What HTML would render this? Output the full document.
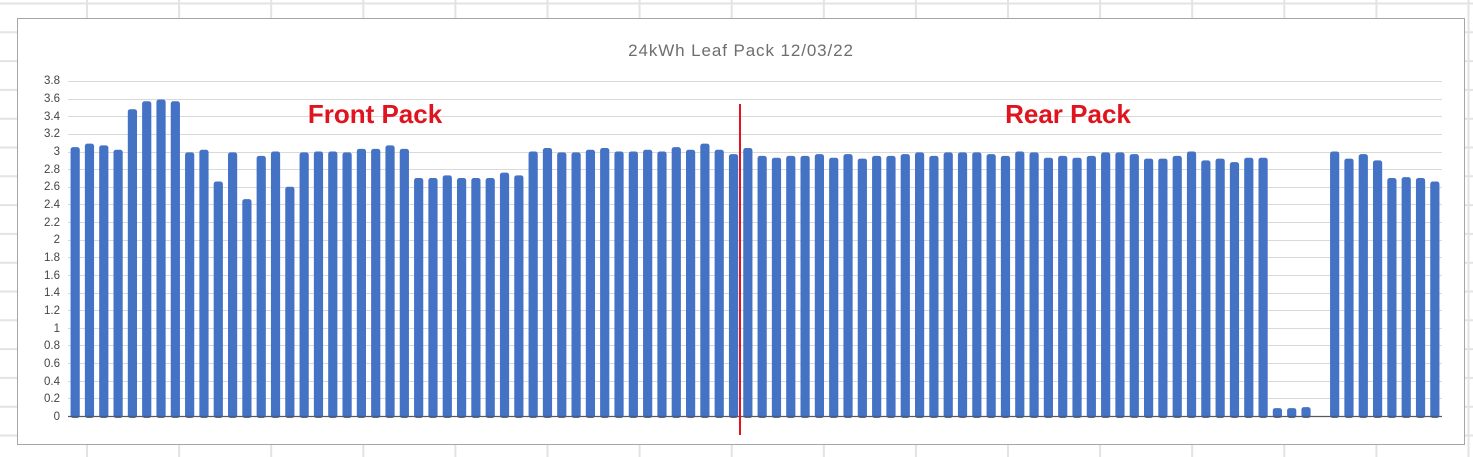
<!DOCTYPE html>
<html><head><meta charset="utf-8"><style>
html,body{margin:0;padding:0;width:1473px;height:457px;overflow:hidden;background:#fff}
svg{display:block}
</style></head><body>
<svg id="s" width="1473" height="457" xmlns="http://www.w3.org/2000/svg" font-family="Liberation Sans, sans-serif">
<g id="bg" stroke="#e3e3e3" stroke-width="2"></g>
<rect x="17.5" y="18.5" width="1447" height="426" fill="#fff" stroke="#a6a6a6" stroke-width="1"/>
<text x="741" y="56" text-anchor="middle" font-size="17" letter-spacing="0.9" fill="#6e6e6e">24kWh Leaf Pack 12/03/22</text>
<g id="grid" stroke="#d9d9d9" stroke-width="1"></g>
<g font-size="11.5" fill="#444" text-anchor="end">
<text x="60" y="420">0</text><text x="60" y="402">0.2</text><text x="60" y="385">0.4</text><text x="60" y="367">0.6</text><text x="60" y="349">0.8</text><text x="60" y="332">1</text><text x="60" y="314">1.2</text><text x="60" y="296">1.4</text><text x="60" y="279">1.6</text><text x="60" y="261">1.8</text><text x="60" y="243">2</text><text x="60" y="226">2.2</text><text x="60" y="208">2.4</text><text x="60" y="190">2.6</text><text x="60" y="173">2.8</text><text x="60" y="155">3</text><text x="60" y="137">3.2</text><text x="60" y="120">3.4</text><text x="60" y="102">3.6</text><text x="60" y="84">3.8</text>
</g>
<g id="bars" fill="#4472c4"></g>
<line x1="68" y1="416.5" x2="1442" y2="416.5" stroke="#595959" stroke-width="1.3"/>
<line x1="740" y1="104" x2="740" y2="435" stroke="#e0141e" stroke-width="2"/>
<text x="375" y="123" text-anchor="middle" font-size="26" font-weight="bold" fill="#e0141e">Front Pack</text>
<text x="1068" y="123" text-anchor="middle" font-size="26" font-weight="bold" fill="#e0141e">Rear Pack</text>
</svg>
<script>
var NS="http://www.w3.org/2000/svg";
function el(p,t,a){var e=document.createElementNS(NS,t);for(var k in a)e.setAttribute(k,a[k]);p.appendChild(e);}
var bg=document.getElementById('bg');
for(var x=87;x<1473;x+=92.1)el(bg,'line',{x1:x,y1:0,x2:x,y2:457});
for(var y=3.5;y<457;y+=28.8)el(bg,'line',{x1:0,y1:y,x2:1473,y2:y});
var g=document.getElementById('grid');
for(var i=1;i<=19;i++){var yy=Math.round(416-i*17.63)+0.5;el(g,'line',{x1:68,y1:yy,x2:1442,y2:yy});}
var v=[3.05,3.09,3.07,3.02,3.48,3.57,3.59,3.57,2.99,3.02,2.66,2.99,2.46,2.95,3.00,2.60,2.99,3.00,3.00,2.99,3.03,3.03,3.07,3.03,2.70,2.70,2.73,2.70,2.70,2.70,2.76,2.73,3.00,3.04,2.99,2.99,3.02,3.04,3.00,3.00,3.02,3.00,3.05,3.02,3.09,3.02,2.97,
3.04,2.95,2.93,2.95,2.95,2.97,2.93,2.97,2.92,2.95,2.95,2.97,2.99,2.95,2.99,2.99,2.99,2.97,2.95,3.00,2.99,2.93,2.95,2.93,2.95,2.99,2.99,2.97,2.92,2.92,2.95,3.00,2.90,2.92,2.88,2.93,2.93,0.09,0.09,0.10,0,3.00,2.92,2.97,2.90,2.70,2.71,2.70,2.66];
var b=document.getElementById('bars');
for(var i=0;i<v.length;i++){if(!v[i])continue;var h=v[i]*88.16;var cx=68+(i+0.5)*14.3125;
el(b,'rect',{x:cx-4.6,y:416-h,width:9.2,height:h+2,rx:2.5});}
</script>
</body></html>
